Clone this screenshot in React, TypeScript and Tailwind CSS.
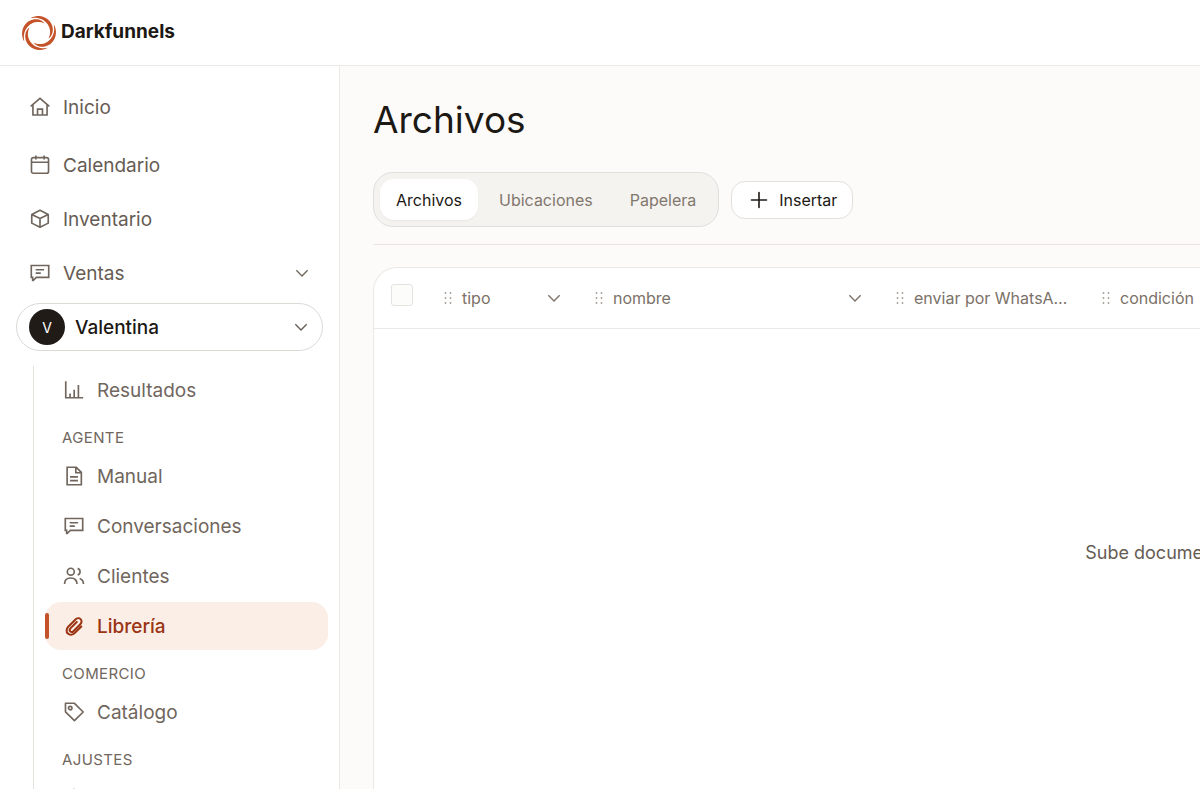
import type { ReactNode } from "react";

type IconProps = { className?: string };

function Svg({ children, className = "size-[22px]" }: { children: ReactNode; className?: string }) {
  return (
    <svg viewBox="0 0 24 24" fill="none" stroke="currentColor" strokeWidth={1.8} aria-hidden="true" className={`shrink-0 ${className}`}>
      {children}
    </svg>
  );
}

const HomeIcon = () => (
  <Svg>
    <path d="M1.8 11.3 12 2.5l10.2 8.8M4.3 9.3V20.7h15.4V9.3M9.3 20.7v-6.4h5.4v6.4" />
  </Svg>
);
const CalendarIcon = () => (
  <Svg>
    <rect x="2.7" y="4" width="18.6" height="17" rx="2" />
    <path d="M2.7 9h18.6M7.5 1.5V6M16.5 1.5V6" />
  </Svg>
);
const BoxIcon = () => (
  <Svg>
    <path d="m12 2.5 9 4.5v9.500L12 21l-9-4.500V7zM3 7l9 4.500L21 7M12 11.500V21" strokeLinejoin="round" />
  </Svg>
);
const ChatIcon = () => (
  <Svg>
    <path d="M2.5 3.8h19v13H8l-3.400 3.400H4v-3.400H2.500zM7.300 8.400h9.200M7.300 12.200h5.600" />
  </Svg>
);
const ChartIcon = () => (
  <Svg>
    <path d="M3 2.500v18h19M7.700 20v-4.200M12.200 20v-8.300M16.800 20V6.500" />
  </Svg>
);
const FileIcon = () => (
  <Svg>
    <path d="M4.500 2.500h10L20 8v13.500H4.500zM14 2.500v6h6M7.700 13h8.600M7.700 17h8.600" />
  </Svg>
);
const UsersIcon = () => (
  <Svg>
    <circle cx="8.5" cy="7.3" r="3.8" />
    <path d="M1.700 20.800c0-4.200 2.700-6.600 6.800-6.600s6.800 2.400 6.800 6.600M16 3.700c1.700.6 2.600 1.900 2.600 3.600s-.9 3-2.600 3.600M18.200 14.700c2.700 1 4.100 3.200 4.200 6.100" />
  </Svg>
);
const ClipIcon = () => (
  <Svg>
    <path d="m20 12.500-7.300 7.300c-2.100 2.100-5.400 2.300-7.400.4s-1.700-5.200.4-7.400l7.900-7.900c1.600-1.600 4.100-1.800 5.600-.4s1.300 4-.3 5.600l-7.600 7.600c-1 1-2.500 1.100-3.400.2s-.7-2.300.2-3.300l6.900-6.900" strokeLinecap="round" strokeWidth={2.2} />
  </Svg>
);
const TagIcon = () => (
  <Svg>
    <path d="M2.700 2.500h9.800L22 12l-9.500 9.500L2.700 11.800z" strokeLinejoin="round" />
    <circle cx="7.9" cy="7.7" r="1.9" />
  </Svg>
);
const GearIcon = () => (
  <Svg>
    <circle cx="12" cy="12" r="6.5" />
    <path d="M12 2v3.500M12 18.500V22M2 12h3.500M18.500 12H22" />
  </Svg>
);
const ChevronDown = ({ className = "size-4" }: IconProps) => (
  <Svg className={className}>
    <path d="m3.500 8 8.500 8.500L20.500 8" strokeWidth={2} />
  </Svg>
);

const Grip = () => (
  <svg viewBox="0 0 8 12" fill="#a59d95" aria-hidden="true" className="h-3 w-2 shrink-0">
    {[1, 6, 11].map((y) => (
      <g key={y}>
        <circle cx="1.5" cy={y} r="0.9" />
        <circle cx="6.5" cy={y} r="0.9" />
      </g>
    ))}
  </svg>
);

// Tapered blade that starts on the outer rim and spirals inwards
function bladePath() {
  const steps = 24;
  const outer: string[] = [];
  const inner: string[] = [];
  for (let i = 0; i <= steps; i++) {
    const t = i / steps;
    const angle = (t * 150 * Math.PI) / 180;
    const r = 17 - 6 * t;
    const half = 1.75 * Math.pow(Math.sin(Math.PI * t), 0.8);
    const top = Math.min(r + half, 17.6);
    outer.push(`${(top * Math.cos(angle)).toFixed(2)} ${(top * Math.sin(angle)).toFixed(2)}`);
    inner.unshift(`${((r - half) * Math.cos(angle)).toFixed(2)} ${((r - half) * Math.sin(angle)).toFixed(2)}`);
  }
  return `M${[...outer, ...inner].join("L")}Z`;
}

const blade = bladePath();

const Logo = () => (
  <svg viewBox="-18 -18 36 36" fill="#c4532a" aria-hidden="true" className="size-9 shrink-0">
    {[-120, -30, 60, 150].map((angle) => (
      <path key={angle} transform={`rotate(${angle})`} d={blade} />
    ))}
  </svg>
);

function NavItem({ icon, label, expandable }: { icon: ReactNode; label: string; expandable?: boolean }) {
  return (
    <a href="#" className="flex h-12 items-center gap-3 px-[13px] text-[#70665d]">
      {icon}
      <span className="flex-1 pt-[2px] text-[#665c54]">{label}</span>
      {expandable && <ChevronDown />}
    </a>
  );
}

function SubItem({ icon, label, active }: { icon: ReactNode; label: string; active?: boolean }) {
  return (
    <a
      href="#"
      aria-current={active ? "page" : undefined}
      className={`relative flex h-12 items-center gap-3 rounded-2xl px-[18px] ${active ? "bg-[#faeee6] font-medium text-[#9a3412]" : "text-[#70665d]"}`}
    >
      {active && <span className="absolute left-0 top-[11px] h-[26px] w-1 rounded-full bg-[#c4532a]" />}
      {icon}
      <span className="pt-[2px]">{label}</span>
    </a>
  );
}

const SectionLabel = ({ children }: { children: ReactNode }) => (
  <h2 className="flex h-[38px] items-center pt-[10px] pl-[17px] text-[15px] tracking-wide text-[#70665d]">{children}</h2>
);

function Sidebar() {
  return (
    <aside className="w-[340px] shrink-0 border-r border-[#ebe9e6] bg-white px-4 pt-[17px] text-[19px]">
      <nav className="flex flex-col gap-[6px]">
        <div className="pb-1">
          <NavItem icon={<HomeIcon />} label="Inicio" />
        </div>
        <NavItem icon={<CalendarIcon />} label="Calendario" />
        <NavItem icon={<BoxIcon />} label="Inventario" />
        <NavItem icon={<ChatIcon />} label="Ventas" expandable />
        <button type="button" className="flex h-12 items-center gap-[10px] rounded-full border border-[#dddad6] bg-white pr-[13px] pl-3 text-left font-medium text-[#1c1814]">
          <span className="flex size-9 items-center justify-center rounded-full bg-[#211b17] text-[14px] font-normal text-white">V</span>
          <span className="flex-1 pt-[2px]">Valentina</span>
          <ChevronDown className="size-4 text-[#665c54]" />
        </button>
      </nav>
      <nav className="mt-[15px] ml-[17px] -mr-[5px] border-l border-[#e5e2de] pl-[11px]">
        <SubItem icon={<ChartIcon />} label="Resultados" />
        <SectionLabel>AGENTE</SectionLabel>
        <div className="flex flex-col gap-[2px]">
          <SubItem icon={<FileIcon />} label="Manual" />
          <SubItem icon={<ChatIcon />} label="Conversaciones" />
          <SubItem icon={<UsersIcon />} label="Clientes" />
          <SubItem icon={<ClipIcon />} label="Librería" active />
        </div>
        <SectionLabel>COMERCIO</SectionLabel>
        <SubItem icon={<TagIcon />} label="Catálogo" />
        <SectionLabel>AJUSTES</SectionLabel>
        <SubItem icon={<GearIcon />} label="" />
      </nav>
    </aside>
  );
}

const tabs = ["Archivos", "Ubicaciones", "Papelera"];

function Toolbar() {
  return (
    <div className="flex items-center gap-3 border-b border-[#e7e4e1] pb-[17px]">
      <div role="tablist" className="flex h-[55px] items-center gap-[5px] rounded-[20px] border border-[#e1dfdb] bg-[#f4f3f0] px-[6px]">
        {tabs.map((tab, i) => (
          <button
            key={tab}
            type="button"
            role="tab"
            aria-selected={i === 0}
            className={`h-[41px] rounded-[14px] px-4 text-[16px] ${i === 0 ? "bg-white text-[#1c1814] shadow-xs" : "text-[#82776d]"}`}
          >
            {tab}
          </button>
        ))}
      </div>
      <button type="button" className="flex h-[38px] items-center gap-2 rounded-[14px] border border-[#e1dfdb] bg-white px-[15px] text-[16px] text-[#1c1814]">
        <svg viewBox="0 0 24 24" stroke="currentColor" strokeWidth={1.6} strokeLinecap="round" aria-hidden="true" className="size-6">
          <path d="M12 4.500v15M4.500 12h15" />
        </svg>
        Insertar
      </button>
    </div>
  );
}

const columns = [
  { name: "tipo", sortable: true },
  { name: "nombre", sortable: true },
  { name: "enviar por WhatsA…", sortable: false },
  { name: "condición", sortable: false },
];

function FilesTable() {
  return (
    <div className="mt-[22px] min-h-[600px] overflow-hidden rounded-l-3xl border border-r-0 border-[#ebe9e7] bg-white">
      <table className="w-[1577px] table-fixed border-collapse">
        <colgroup>
          <col className="w-[62px]" />
          <col className="w-[151px]" />
          <col className="w-[301px]" />
          <col className="w-[206px]" />
          <col />
        </colgroup>
        <thead>
          <tr className="h-[60px] border-b border-[#ebe9e7]">
            <th className="pb-[6px] pl-[17px] text-left">
              <input type="checkbox" aria-label="Seleccionar todo" className="block size-[22px] appearance-none rounded-[3px] border border-[#e5e3e0] bg-[#fcfcfb]" />
            </th>
            {columns.map((col) => (
              <th key={col.name} className="pr-[25px] pl-2 font-normal">
                <div className="flex items-center gap-[10px] text-[16px] whitespace-nowrap text-[#7b7168]">
                  <Grip />
                  <span className="flex-1 text-left">{col.name}</span>
                  {col.sortable && <ChevronDown />}
                </div>
              </th>
            ))}
          </tr>
        </thead>
        <tbody>
          <tr>
            <td colSpan={5} className="h-[448px] text-center text-[18px] text-[#665c54]">
              Sube documentos
            </td>
          </tr>
        </tbody>
      </table>
    </div>
  );
}

export default function App() {
  return (
    <div className="flex h-screen flex-col overflow-hidden bg-[#fcfbf9] font-['Inter',sans-serif]">
      <header className="flex h-[66px] shrink-0 items-center gap-1 border-b border-[#ebe9e6] bg-white px-[21px]">
        <Logo />
        <span className="text-[19px] font-bold text-[#1c1814]">Darkfunnels</span>
      </header>
      <div className="flex min-h-0 flex-1">
        <Sidebar />
        <main className="min-w-0 flex-1 pt-[30px] pl-[33px]">
          <h1 className="mb-[28px] text-[37px] leading-[48px] text-[#1c1814]">Archivos</h1>
          <Toolbar />
          <FilesTable />
        </main>
      </div>
    </div>
  );
}
